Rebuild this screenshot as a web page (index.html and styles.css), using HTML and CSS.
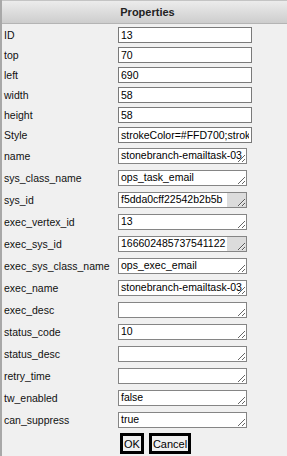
FILE: index.html
```html
<!DOCTYPE html>
<html lang="en">
<head>
    <meta charset="UTF-8">
    <meta name="viewport" content="width=device-width, initial-scale=1.0">
    <title>Properties</title>
    <link rel="stylesheet" href="styles.css">
</head>
<body>
    <div class="panel">
        <div class="panel-title">Properties</div>

        <div class="props">
            <div class="row"><label>ID</label><input type="text" value="13"></div>
            <div class="row"><label>top</label><input type="text" value="70"></div>
            <div class="row"><label>left</label><input type="text" value="690"></div>
            <div class="row"><label>width</label><input type="text" value="58"></div>
            <div class="row"><label>height</label><input type="text" value="58"></div>
            <div class="row"><label>Style</label><input type="text" value="strokeColor=#FFD700;strokeWidth=2"></div>

            <div class="row tall"><label>name</label><textarea wrap="off">stonebranch-emailtask-03</textarea></div>
            <div class="row tall"><label>sys_class_name</label><textarea wrap="off">ops_task_email</textarea></div>
            <div class="row tall"><label>sys_id</label><textarea wrap="off" class="long">f5dda0cff22542b2b5b</textarea></div>
            <div class="row tall"><label>exec_vertex_id</label><textarea wrap="off">13</textarea></div>
            <div class="row tall"><label>exec_sys_id</label><textarea wrap="off" class="long">166602485737541122</textarea></div>
            <div class="row tall"><label>exec_sys_class_name</label><textarea wrap="off">ops_exec_email</textarea></div>
            <div class="row tall"><label>exec_name</label><textarea wrap="off">stonebranch-emailtask-03</textarea></div>
            <div class="row tall"><label>exec_desc</label><textarea wrap="off"></textarea></div>
            <div class="row tall"><label>status_code</label><textarea wrap="off">10</textarea></div>
            <div class="row tall"><label>status_desc</label><textarea wrap="off"></textarea></div>
            <div class="row tall"><label>retry_time</label><textarea wrap="off"></textarea></div>
            <div class="row tall"><label>tw_enabled</label><textarea wrap="off">false</textarea></div>
            <div class="row tall"><label>can_suppress</label><textarea wrap="off">true</textarea></div>

            <div class="buttons">
                <button type="button">OK</button>
                <button type="button">Cancel</button>
            </div>
        </div>
    </div>
</body>
</html>
```

FILE: styles.css
```css
html {
    overflow: hidden;
}

body {
    margin: 0;
    font-family: "Liberation Sans", Arial, sans-serif;
    font-size: 10.5px;
    color: #111;
    background-color: #f0f0f0;
}

.panel {
    width: 291px;
    min-height: 456px;
    border-left: 2px solid #a8a8a8;
    background-color: #f0f0f0;
}

.panel-title {
    box-sizing: border-box;
    height: 24px;
    line-height: 22px;
    text-align: center;
    font-size: 11px;
    font-weight: bold;
    color: #222;
    border-top: 1px solid #c4c4c4;
    border-bottom: 1px solid #b4b4b4;
    background: linear-gradient(#ececec, #cdcdcd);
}

.props {
    padding-top: 1px;
}

.row {
    display: flex;
    align-items: center;
    height: 20px;
}

.row.tall {
    height: 22px;
}

.row label {
    width: 114px;
    padding-left: 2px;
    flex-shrink: 0;
}

input[type="text"], textarea {
    font-family: "Liberation Sans", Arial, sans-serif;
    font-size: 10.5px;
    color: #000;
    background-color: #fff;
    box-sizing: border-box;
    margin: 0;
}

input[type="text"] {
    width: 134px;
    height: 16px;
    padding: 0 2px;
    border: 1px solid #7a7a7a;
}

textarea {
    width: 129px;
    height: 16px;
    padding: 0 2px;
    line-height: 13px;
    border: 1px solid #858585;
    overflow: hidden;
    resize: both;
}

textarea.long {
    background: linear-gradient(to right, #fff 108px, #dcdcdc 108px);
}

.buttons {
    display: flex;
    gap: 5px;
    padding-left: 118px;
    margin-top: 2px;
}

.buttons button {
    font-family: "Liberation Sans", Arial, sans-serif;
    font-size: 11px;
    height: 21px;
    padding: 0 1px;
    color: #000;
    background-color: #f0f0f0;
    border: 3px solid #000;
    border-radius: 0;
}
```
